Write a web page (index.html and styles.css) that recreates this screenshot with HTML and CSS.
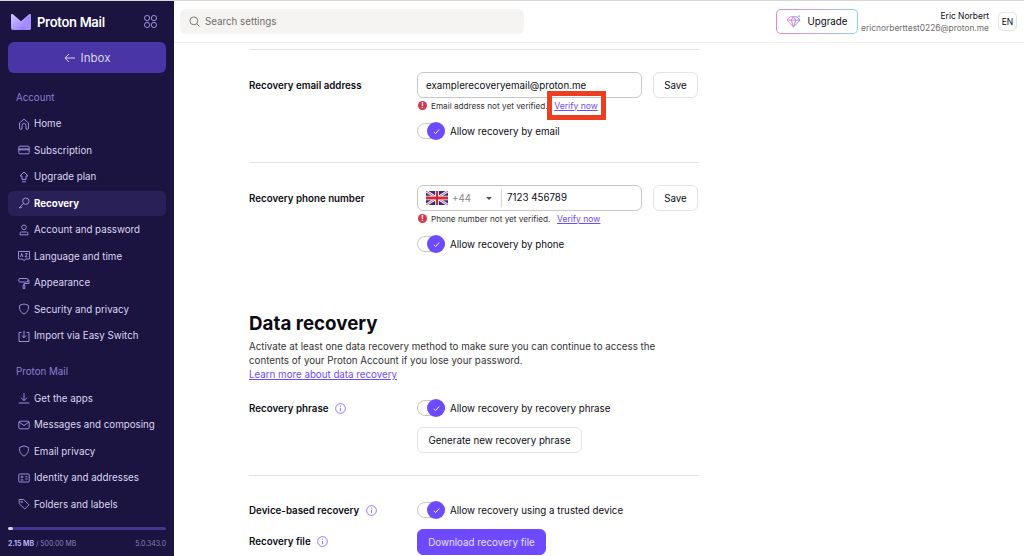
FILE: index.html
```html
<!DOCTYPE html>
<html lang="en">
<head>
<meta charset="utf-8">
<title>Recovery - Proton Mail</title>
<link rel="stylesheet" href="styles.css">
</head>
<body>
<div class="app">
  <aside class="sidebar">
    <div class="brand">
      <svg class="logo" viewBox="0 0 20 16" width="20" height="16"><defs><linearGradient id="lg" x1="0" y1="0" x2="1" y2="1"><stop offset="0" stop-color="#d6c8ff"/><stop offset="1" stop-color="#8a6bff"/></linearGradient></defs><path d="M0 1.2c0-1 1.1-1.5 1.9-.9L10 7.2 18.1.3c.8-.6 1.9-.1 1.9.9V14a2 2 0 0 1-2 2H2a2 2 0 0 1-2-2z" fill="url(#lg)"/><path d="M14 4.6 20 .9V14a2 2 0 0 1-2 2h-4z" fill="#a58bff"/></svg>
      <span class="brand-name">Proton Mail</span>
      <svg class="apps" viewBox="0 0 14 14" width="13" height="13" fill="none" stroke="#a99ce6"><rect x=".5" y=".5" width="5.6" height="5.6" rx="2.8"/><rect x="7.9" y=".5" width="5.6" height="5.6" rx="2.8"/><rect x=".5" y="7.9" width="5.6" height="5.6" rx="2.8"/><rect x="7.9" y="7.9" width="5.6" height="5.6" rx="2.8"/></svg>
    </div>
    <div class="inbox"><svg viewBox="0 0 12 10" width="12" height="10" fill="none" stroke="#d8d2f2"><path d="M11 5H1M5 1 1 5l4 4"/></svg>Inbox</div>
    <div class="nav-title">Account</div>
    <nav>
      <a class="nav-item"><svg viewBox="0 0 12 12" class="ni"><path d="M1.5 5 6 1.2 10.500 5v5.500a.6.6 0 0 1-.6.6H8V7.500a2 2 0 0 0-4 0v3.600H2.100a.6.6 0 0 1-.6-.6z"/></svg>Home</a>
      <a class="nav-item"><svg viewBox="0 0 12 12" class="ni"><rect x=".8" y="2.200" width="10.400" height="7.600" rx="1"/><path d="M.8 4.900h10.400M.8 5.800h10.400"/></svg>Subscription</a>
      <a class="nav-item"><svg viewBox="0 0 12 12" class="ni"><path d="M6 1 10 5H8v3.500H4V5H2zM4 10.800h4"/></svg>Upgrade plan</a>
      <a class="nav-item active"><svg viewBox="0 0 12 12" class="ni"><circle cx="7.800" cy="4.200" r="3.200"/><path d="M5.500 6.500 1.200 10.800h2L4 9.800"/></svg>Recovery</a>
      <a class="nav-item"><svg viewBox="0 0 12 12" class="ni"><circle cx="6" cy="3.300" r="2.300"/><path d="M2 10.800V9.500a1.500 1.500 0 0 1 1.500-1.500h5A1.500 1.500 0 0 1 10 9.500v1.300z"/></svg>Account and password</a>
      <a class="nav-item"><svg viewBox="0 0 12 12" class="ni"><path d="M.5 1.500h11v7.500H7.500L6 10.800 4.500 9H.5z"/><path d="M2.500 7 3.700 3.500 4.900 7M7 3.700h2.500L7 6.800h2.500"/></svg>Language and time</a>
      <a class="nav-item"><svg viewBox="0 0 12 12" class="ni"><rect x=".8" y="1.500" width="9" height="3.500" rx="1"/><path d="M9.800 3.200H11v3.300H6V8M5.200 8h1.600v3.500H5.200z"/></svg>Appearance</a>
      <a class="nav-item"><svg viewBox="0 0 12 12" class="ni"><path d="M6 .9 10.500 2.400c.3 4-1 7-4.500 8.700-3.500-1.700-4.800-4.700-4.500-8.700z"/></svg>Security and privacy</a>
      <a class="nav-item"><svg viewBox="0 0 12 12" class="ni"><path d="M3.500 2.500H1v9h10v-9H8.500M6 .6v7M3.800 5.500 6 7.700l2.200-2.200"/></svg>Import via Easy Switch</a>
    </nav>
    <div class="nav-title second">Proton Mail</div>
    <nav>
      <a class="nav-item"><svg viewBox="0 0 12 12" class="ni"><path d="M6 1v7.500M3 5.700l3 3 3-3M.8 11h10.400"/></svg>Get the apps</a>
      <a class="nav-item"><svg viewBox="0 0 12 12" class="ni"><rect x=".8" y="2.200" width="10.400" height="7.600" rx="1"/><path d="M1 3l5 3.500L11 3"/></svg>Messages and composing</a>
      <a class="nav-item"><svg viewBox="0 0 12 12" class="ni"><path d="M6 .9 10.500 2.400c.3 4-1 7-4.500 8.700-3.500-1.700-4.800-4.700-4.500-8.700z"/></svg>Email privacy</a>
      <a class="nav-item"><svg viewBox="0 0 12 12" class="ni"><rect x=".8" y="2" width="10.400" height="8" rx=".8"/><circle cx="4" cy="5" r=".9"/><path d="M2.600 8h2.800M7.300 4.800h2.200M7.300 7h2.200"/></svg>Identity and addresses</a>
      <a class="nav-item"><svg viewBox="0 0 12 12" class="ni"><path d="M1.200 1.500h4.500l5.300 5.300-4.200 4.200-5.600-5.300z"/><circle cx="3.700" cy="3.900" r=".7"/></svg>Folders and labels</a>
    </nav>
    <div class="storage">
      <div class="bar"><div class="bar-fill"></div></div>
      <div class="storage-text"><span><b>2.15 MB</b> / 500.00 MB</span><span>5.0.343.0</span></div>
    </div>
  </aside>
  <div class="main">
    <header class="topbar">
      <div class="search"><svg viewBox="0 0 12 12" width="11" height="11" fill="none" stroke="#6f6c6a"><circle cx="5.300" cy="5.300" r="4.300"/><path d="m8.500 8.500 3 3"/></svg>Search settings</div>
      <div class="upgrade">
        <svg viewBox="0 0 16 14" width="15" height="13" fill="none"><defs><linearGradient id="gem" x1="0" y1="0" x2="1" y2="0"><stop offset="0" stop-color="#ee7fc0"/><stop offset="1" stop-color="#8f7be8"/></linearGradient></defs><path d="M4 2h8l3 3.500L8 13 1 5.500zM1 5.500h14M5.500 5.500 8 13l2.500-7.500L8 2z" stroke="url(#gem)"/><path d="M14 .2v2.400M12.800 1.400h2.400" stroke="#7ac4f0"/></svg>
        Upgrade
      </div>
      <div class="user"><div class="user-name">Eric Norbert</div><div class="user-mail">ericnorberttest0226@proton.me</div></div>
      <div class="lang">EN</div>
    </header>
    <main class="content">
      <section class="block">
        <div class="row">
          <div class="label tall">Recovery email address</div>
          <div class="field">
            <div class="input-line"><div class="input">examplerecoveryemail@proton.me</div><div class="btn save">Save</div></div>
            <div class="hint"><span class="err">!</span>Email address not yet verified.<span class="verify first">Verify now<span class="callout"></span></span></div>
            <div class="toggle-line"><span class="toggle"><span class="thumb"><svg viewBox="0 0 10 10" width="9" height="9" fill="none" stroke="#fff"><path d="m2 5.300 2 2 4-4.500"/></svg></span></span>Allow recovery by email</div>
          </div>
        </div>
      </section>
      <section class="block">
        <div class="row">
          <div class="label tall">Recovery phone number</div>
          <div class="field">
            <div class="input-line">
              <div class="input phone">
                <svg class="flag" viewBox="0 0 60 30" width="22" height="14" preserveAspectRatio="none"><rect width="60" height="30" fill="#24337c"/><path d="M0 0 60 30M60 0 0 30" stroke="#fff" stroke-width="6"/><path d="M0 0 60 30M60 0 0 30" stroke="#cf2a3c" stroke-width="2"/><path d="M30 0v30M0 15h60" stroke="#fff" stroke-width="10"/><path d="M30 0v30M0 15h60" stroke="#cf2a3c" stroke-width="6"/></svg>
                <span class="code">+44</span><span class="caret"></span><span class="num">7123 456789</span>
              </div>
              <div class="btn save">Save</div>
            </div>
            <div class="hint"><span class="err">!</span>Phone number not yet verified.<span class="verify">Verify now</span></div>
            <div class="toggle-line"><span class="toggle"><span class="thumb"><svg viewBox="0 0 10 10" width="9" height="9" fill="none" stroke="#fff"><path d="m2 5.300 2 2 4-4.500"/></svg></span></span>Allow recovery by phone</div>
          </div>
        </div>
      </section>
      <h2 class="heading">Data recovery</h2>
      <p class="desc">Activate at least one data recovery method to make sure you can continue to access the contents of your Proton Account if you lose your password.<br><span class="link">Learn more about data recovery</span></p>
      <section class="block phrase">
        <div class="row">
          <div class="label">Recovery phrase<svg class="info" viewBox="0 0 12 12"><circle cx="6" cy="6" r="5.300"/><path d="M6 5.200v3.600M6 3v1.200"/></svg></div>
          <div class="field">
            <div class="toggle-line flush"><span class="toggle"><span class="thumb"><svg viewBox="0 0 10 10" width="9" height="9" fill="none" stroke="#fff"><path d="m2 5.300 2 2 4-4.500"/></svg></span></span>Allow recovery by recovery phrase</div>
            <div class="btn generate">Generate new recovery phrase</div>
          </div>
        </div>
      </section>
      <section class="device">
        <div class="row">
          <div class="label">Device-based recovery<svg class="info" viewBox="0 0 12 12"><circle cx="6" cy="6" r="5.300"/><path d="M6 5.200v3.600M6 3v1.200"/></svg></div>
          <div class="field"><div class="toggle-line flush"><span class="toggle"><span class="thumb"><svg viewBox="0 0 10 10" width="9" height="9" fill="none" stroke="#fff"><path d="m2 5.300 2 2 4-4.500"/></svg></span></span>Allow recovery using a trusted device</div></div>
        </div>
        <div class="row file-row">
          <div class="label tall">Recovery file<svg class="info" viewBox="0 0 12 12"><circle cx="6" cy="6" r="5.300"/><path d="M6 5.200v3.600M6 3v1.200"/></svg></div>
          <div class="field"><div class="btn primary">Download recovery file</div></div>
        </div>
      </section>
    </main>
  </div>
</div>
</body>
</html>
```

FILE: styles.css
```css
* { box-sizing: border-box; }
html, body { margin: 0; height: 100%; overflow: hidden; }
body { font-family: Inter, "Liberation Sans", sans-serif; font-size: 9.75px; color: #0c0c14; background: #fff; }
.app { display: flex; height: 556px; border-top: 1px solid #d9d8d6; }

.sidebar { width: 174px; flex: none; background: #1b1340; color: #dcd7f0; display: flex; flex-direction: column; padding: 0 8px; }
.brand { height: 41px; display: flex; align-items: center; padding: 0 9px 0 3px; }
.logo { flex: none; }
.brand-name { margin-left: 6px; font-size: 13px; font-weight: 600; color: #fff; letter-spacing: -.3px; flex: 1; }
.apps { flex: none; }
.inbox { height: 31px; background: #4a35a6; border-radius: 6px; display: flex; align-items: center; justify-content: center; gap: 5px; font-size: 11.500px; color: #dcd7f0; }
.nav-title { height: 25.500px; line-height: 25.500px; margin-top: 12px; padding-left: 8px; color: #8d7fd0; }
.nav-title.second { height: 26.500px; line-height: 26.500px; margin-top: 9.500px; }
.nav-item { height: 26.500px; display: flex; align-items: center; padding-left: 10px; gap: 4px; white-space: nowrap; }
.nav-item.active { background: #292057; border-radius: 5px; height: 25px; margin: .75px 0; font-weight: 700; color: #fff; }
.ni { width: 12px; height: 12px; flex: none; fill: none; stroke: #a99ce6; stroke-width: .9; }
.storage { margin-top: auto; padding-bottom: 6px; }
.bar { height: 3px; border-radius: 2px; background: #44338f; }
.bar-fill { width: 5px; height: 3px; border-radius: 2px; background: #d6cff5; }
.storage-text { display: flex; justify-content: space-between; margin-top: 8px; font-size: 6.900px; line-height: 12px; color: #8a80bd; }
.storage-text b { color: #b9aff0; font-weight: 700; }

.main { flex: 1; min-width: 0; display: flex; flex-direction: column; }
.topbar { height: 42px; flex: none; border-bottom: 1px solid #f0efed; display: flex; align-items: center; padding: 0 7px 0 6px; }
.search { width: 344px; height: 25px; border-radius: 6px; background: #f5f4f2; display: flex; align-items: center; gap: 5px; padding-left: 9px; color: #6f6c6a; font-size: 9.750px; }
.upgrade { margin-left: 252px; width: 82px; height: 25px; border-radius: 5px; border: 1px solid transparent; background: linear-gradient(#fff, #fff) padding-box, linear-gradient(90deg, #ee83c0, #bcaae6 55%, #8ad0f2) border-box; display: flex; align-items: center; justify-content: center; gap: 6px; font-size: 9.750px; }
.user { margin-left: 3px; width: 128px; text-align: right; line-height: 12px; flex: none; white-space: nowrap; font-size: 8.450px; }
.user-mail { color: #6f6c6a; font-size: 8.380px; }
.lang { margin-left: 9px; width: 19px; height: 19px; border: 1px solid #e5e3e0; border-radius: 5px; display: flex; align-items: center; justify-content: center; font-size: 8.500px; }

.content { flex: 1; min-height: 0; overflow: hidden; padding: 6px 0 0 75px; width: 525px; }
.block { border-top: 1px solid #e3e2e0; padding: 22px 0; }
.row { display: grid; grid-template-columns: 168px 281px; }
.label { font-weight: 600; height: 18px; padding-top: 1px; line-height: 18px; display: flex; align-items: center; gap: 6.500px; white-space: nowrap; }
.label.tall { height: 26px; }
.file-row .label.tall { padding-top: 0; height: 25px; }
.info { width: 11px; height: 11px; flex: none; fill: none; stroke: #6d4aff; stroke-width: .8; }
.input-line { display: flex; justify-content: space-between; }
.input { width: 225px; height: 26px; border: 1px solid #c9c7c4; border-radius: 6px; display: flex; align-items: center; padding-left: 8px; white-space: nowrap; }
.phone { position: relative; }
.flag { flex: none; }
.code { margin-left: 4px; color: #8a8784; width: 34px; }
.caret { width: 0; height: 0; border-left: 3px solid transparent; border-right: 3px solid transparent; border-top: 3px solid #55524f; margin-right: 9px; }
.num { border-left: 1px solid #d6d4d1; padding-left: 5px; line-height: 18px; }
.btn { height: 26px; border: 1px solid #e5e3e0; border-radius: 6px; display: flex; align-items: center; justify-content: center; background: #fff; white-space: nowrap; }
.save { width: 45px; }
.hint { height: 14px; padding-top: 1px; display: flex; align-items: center; font-size: 8.200px; color: #333; white-space: nowrap; }
.err { width: 9px; height: 9px; border-radius: 50%; background: #d5384e; color: #fff; font-size: 7px; font-weight: 700; line-height: 9px; text-align: center; margin: 0 4px 0 1px; flex: none; }
.verify { color: #6d4aff; font-size: 8.600px; text-decoration: underline; margin-left: 6.500px; position: relative; }
.callout { position: absolute; left: -7px; top: -9.500px; width: 59px; height: 29px; border: 5px solid #ee3e22; }
.toggle-line { height: 18px; margin-top: 10px; display: flex; align-items: center; gap: 5px; white-space: nowrap; }
.toggle-line.flush { margin-top: 0; }
.toggle { width: 28px; height: 16px; border: 1px solid #c9c7c4; border-radius: 9px; background: #fff; position: relative; display: block; flex: none; }
.thumb { position: absolute; right: -1px; top: -2px; width: 18px; height: 18px; border-radius: 50%; background: #6d4aff; display: flex; align-items: center; justify-content: center; }
.heading { margin: 35px 0 0; font-size: 18.750px; line-height: 28px; font-weight: 700; }
.desc { margin: 2px 0 0; width: 430px; line-height: 14px; color: #333; }
.link { color: #6d4aff; text-decoration: underline; }
.phrase { border-top: 0; padding: 17px 0 22px; }
.generate { margin-top: 10px; width: 165px; }
.device { border-top: 1px solid #e3e2e0; padding-top: 25px; }
.file-row { margin-top: 10px; }
.primary { width: 129px; background: #6d4aff; border-color: #6d4aff; color: #e6e0ff; }
```
